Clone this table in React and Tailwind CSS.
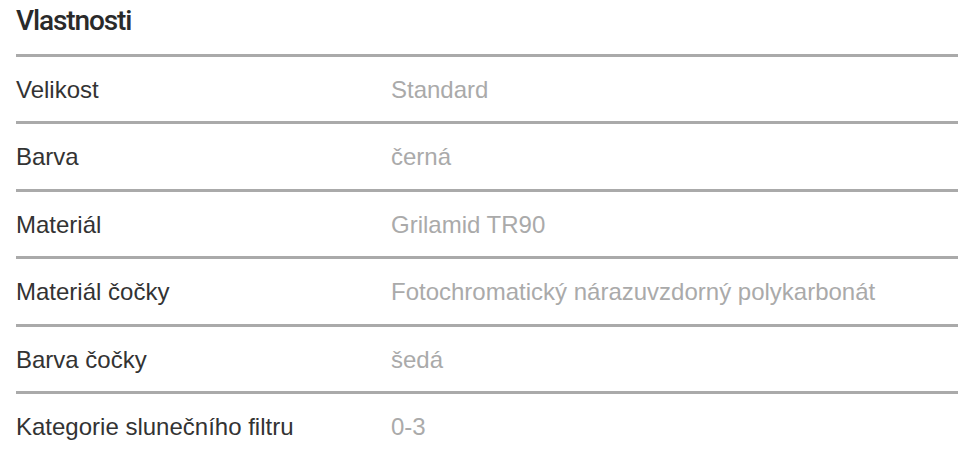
export default function App() {
  const rows = [
    ["Velikost", "Standard"],
    ["Barva", "černá"],
    ["Materiál", "Grilamid TR90"],
    ["Materiál čočky", "Fotochromatický nárazuvzdorný polykarbonát"],
    ["Barva čočky", "šedá"],
    ["Kategorie slunečního filtru", "0-3"],
  ];
  return (
    <div className="bg-white pl-4 font-['Liberation_Sans',Arial,sans-serif]">
      <h2 className="h-[54px] pt-[5px] font-['Roboto',Arial,sans-serif] text-[28px] leading-[32px] font-medium tracking-[-1.1px] text-[#2a2a2a]">
        Vlastnosti
      </h2>
      {rows.map(([k, v]) => (
        <div key={k} className="flex border-t-[3px] border-[#aaaaaa] pt-[19px] pb-[17px] text-[24px] leading-[28.4px]">
          <div className="w-[375px] text-[#333]">{k}</div>
          <div className="text-[#aaaaaa]">{v}</div>
        </div>
      ))}
    </div>
  );
}
